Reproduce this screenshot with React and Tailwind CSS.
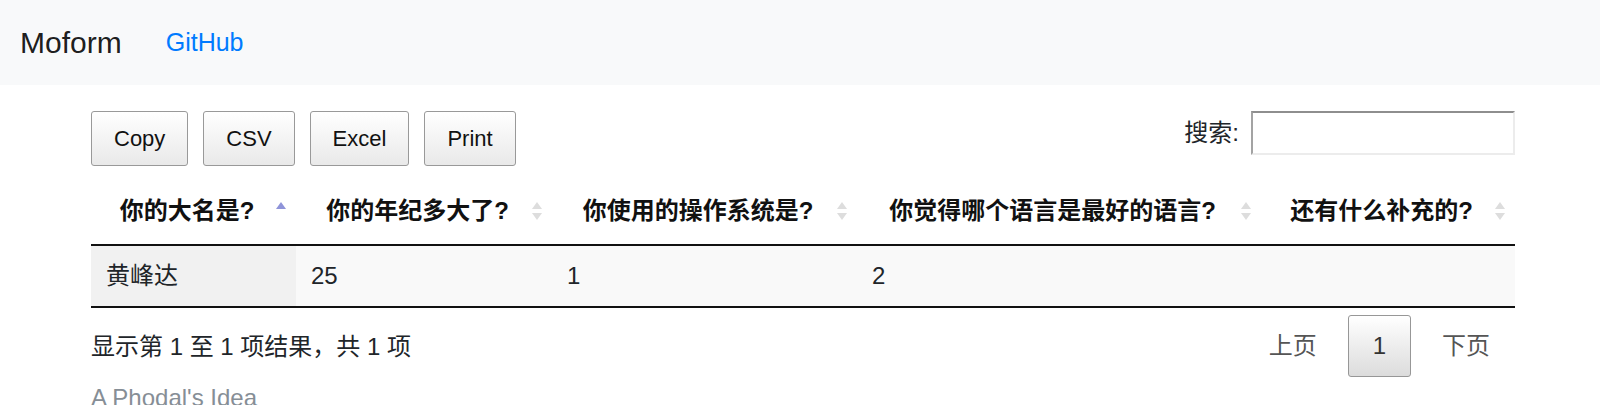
import React from 'react';

const columns = [
    { title: '你的大名是?', width: 'w-[205px]', sort: 'asc' },
    { title: '你的年纪多大了?', width: 'w-[256px]', sort: 'both' },
    { title: '你使用的操作系统是?', width: 'w-[305px]', sort: 'both' },
    { title: '你觉得哪个语言是最好的语言?', width: 'w-[404px]', sort: 'both' },
    { title: '还有什么补充的?', width: 'w-[254px]', sort: 'both' },
];

const rows = [
    ['黄峰达', '25', '1', '2', ''],
];

// DataTables-style sort arrows
const SortIcon = ({ type }) => (
    <svg width="10" height="20" viewBox="0 0 10 20" className="absolute right-[10px] top-1/2 -translate-y-1/2">
        <polygon points="5,1 10,8 0,8" fill={type === 'asc' ? '#8f94d9' : '#dddddd'} />
        {type !== 'asc' && <polygon points="0,12 10,12 5,19" fill="#dddddd" />}
    </svg>
);

const ExportButton = ({ label }) => (
    <button className="h-[55px] px-[22px] text-[22px] text-[#111] border border-[#999] rounded-[3px] bg-gradient-to-b from-white to-[#e9e9e9]">
        {label}
    </button>
);

const App = () => {
    return (
        <div className="min-h-[405px] bg-white text-[#212529] font-['Liberation_Sans','Noto_Sans_CJK_SC',sans-serif]">
            {/* Navbar */}
            <nav className="h-[85px] bg-[#f8f9fa] flex items-center pl-[20px]">
                <span className="text-[30px] text-black/90">Moform</span>
                <a className="ml-[44px] text-[25px] text-[#007bff]">GitHub</a>
            </nav>

            <div className="ml-[91px] w-[1424px]">
                {/* Toolbar */}
                <div className="flex items-start justify-between mt-[26px]">
                    <div className="flex gap-[15px]">
                        <ExportButton label="Copy" />
                        <ExportButton label="CSV" />
                        <ExportButton label="Excel" />
                        <ExportButton label="Print" />
                    </div>
                    <label className="flex items-center h-[44px] text-[24px]">
                        搜索:
                        <input
                            type="text"
                            className="ml-[12px] h-[44px] w-[264px] border-2 border-t-[#8e8e8e] border-l-[#a3a3a3] border-r-[#ececec] border-b-[#ececec] bg-white outline-none"
                        />
                    </label>
                </div>

                {/* Table */}
                <table className="mt-[12px] w-[1424px] table-fixed border-separate border-spacing-0 text-[24px]">
                    <thead>
                        <tr>
                            {columns.map((col) => (
                                <th
                                    key={col.title}
                                    className={`${col.width} relative pl-[15px] pr-[28px] py-[15px] leading-[36px] text-center font-bold text-[#111] whitespace-nowrap border-b-2 border-[#111]`}
                                >
                                    {col.title}
                                    <SortIcon type={col.sort} />
                                </th>
                            ))}
                        </tr>
                    </thead>
                    <tbody>
                        {rows.map((row, i) => (
                            <tr key={i} className="bg-[#f9f9f9]">
                                {row.map((cell, j) => (
                                    <td
                                        key={j}
                                        className={`px-[15px] py-[12px] leading-[36px] border-b-2 border-[#111] ${j === 0 ? 'bg-[#f1f1f1]' : ''}`}
                                    >
                                        {cell}
                                    </td>
                                ))}
                            </tr>
                        ))}
                    </tbody>
                </table>

                {/* Info + pagination */}
                <div className="flex items-start justify-between text-[24px]">
                    <div className="pt-[21px] leading-[36px]">显示第 1 至 1 项结果，共 1 项</div>
                    <div className="flex gap-[6px] pt-[7px]">
                        <span className="px-[24px] py-[12px] leading-[36px] border border-transparent text-[#555]">上页</span>
                        <span className="px-[24px] py-[12px] leading-[36px] border border-[#979797] rounded-[3px] bg-gradient-to-b from-white to-[#dcdcdc] text-[#333]">1</span>
                        <span className="px-[24px] py-[12px] leading-[36px] border border-transparent text-[#555]">下页</span>
                    </div>
                </div>

                {/* Footer */}
                <p className="mt-[3px] text-[24px] leading-[36px] text-[#868e96]">A Phodal's Idea</p>
            </div>
        </div>
    );
};

export default App;
